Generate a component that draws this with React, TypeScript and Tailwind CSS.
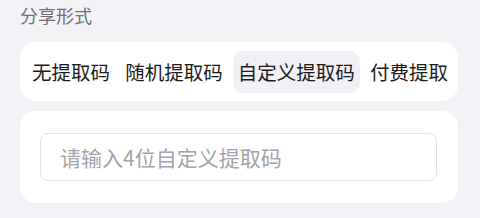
import React, { useState } from "react";

const options = ["无提取码", "随机提取码", "自定义提取码", "付费提取"];

export default function App() {
  const [selected, setSelected] = useState(2);
  const [code, setCode] = useState("");

  return (
    <div
      className="w-[480px] h-[218px] bg-[#f2f2f7] pl-5 pr-[22px] pt-[3px]"
      style={{ fontFamily: '"Noto Sans CJK SC", "Noto Sans", sans-serif' }}
    >
      <div className="text-[18px] leading-[25px] text-[#707075]">分享形式</div>

      <div className="mt-[14px] h-[59px] bg-white rounded-[16px] flex items-center justify-between pl-[7px] pr-[5px]">
        {options.map((opt, i) => (
          <button
            key={opt}
            onClick={() => setSelected(i)}
            className={
              "h-[42px] px-[5px] rounded-[10px] text-[19.5px] leading-none text-[#1c1c1e] " +
              (selected === i ? "bg-[#f0f0f5]" : "")
            }
          >
            {opt}
          </button>
        ))}
      </div>

      <div className="mt-[10px] h-[92px] bg-white rounded-[16px] flex items-center pl-5 pr-[21px]">
        <input
          value={code}
          onChange={(e) => setCode(e.target.value)}
          placeholder="请输入4位自定义提取码"
          className="w-full h-[48px] border border-[#e3e3e8] rounded-[8px] px-[19px] text-[21px] text-[#1c1c1e] placeholder:text-[#a4a4aa] outline-none"
        />
      </div>
    </div>
  );
}
